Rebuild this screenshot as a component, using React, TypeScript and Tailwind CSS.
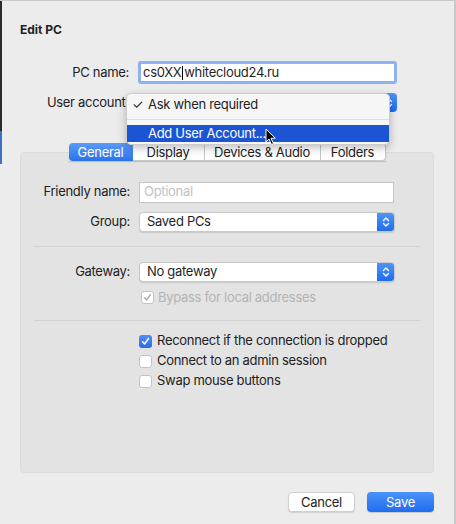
import React from "react";

const font = { fontFamily: "Inter, 'Noto Sans', sans-serif" };

function Chevrons() {
    return (
        <svg width="8" height="12" viewBox="0 0 8 12" fill="none">
            <path d="M1.5 4.5L4 2L6.5 4.5" stroke="white" strokeWidth="1.4" strokeLinecap="round" strokeLinejoin="round" />
            <path d="M1.5 7.5L4 10L6.5 7.5" stroke="white" strokeWidth="1.4" strokeLinecap="round" strokeLinejoin="round" />
        </svg>
    );
}

function Popup({ value }: { value: string }) {
    return (
        <div className="flex h-[20px] w-[256px] items-stretch rounded-[4px] border border-[#c9c9c9] bg-white shadow-[0_1px_1px_rgba(0,0,0,0.12)]">
            <div className="flex flex-1 items-center pl-[7px] text-[13px] text-[#1f1f1f]">{value}</div>
            <div className="flex w-[17px] items-center justify-center rounded-r-[3px] bg-gradient-to-b from-[#4e95f8] to-[#1f6cf0]">
                <Chevrons />
            </div>
        </div>
    );
}

function Check({ checked = false, disabled = false }: { checked?: boolean; disabled?: boolean }) {
    if (checked && !disabled) {
        return (
            <div className="flex h-[13px] w-[13px] items-center justify-center rounded-[3px] bg-gradient-to-b from-[#4f8ff7] to-[#2a6be8]">
                <svg width="9" height="9" viewBox="0 0 9 9" fill="none">
                    <path d="M1.5 4.8L3.6 7L7.5 1.5" stroke="white" strokeWidth="1.5" strokeLinecap="round" strokeLinejoin="round" />
                </svg>
            </div>
        );
    }
    return (
        <div className="flex h-[13px] w-[13px] items-center justify-center rounded-[3px] border border-[#c4c4c4] bg-white">
            {checked ? (
                <svg width="9" height="9" viewBox="0 0 9 9" fill="none">
                    <path d="M1.5 4.8L3.6 7L7.5 1.5" stroke="#b0b0b0" strokeWidth="1.4" strokeLinecap="round" strokeLinejoin="round" />
                </svg>
            ) : null}
        </div>
    );
}

function Row({ label, children }: { label: string; children: React.ReactNode }) {
    return (
        <div className="flex items-center">
            <div className="w-[118px] pr-[9px] text-right text-[13px] text-[#222]">{label}</div>
            {children}
        </div>
    );
}

function Separator() {
    return <div className="mx-[13px] h-px bg-[#d2d2d2]" />;
}

export default function App() {
    return (
        <div style={font} className="relative h-[524px] w-[456px] overflow-hidden border-r-2 border-t border-[#c8c8c8] bg-[#ececec] tracking-[-0.3px] text-[#222]">
            {/* background window edge */}
            <div className="absolute left-0 top-0 h-[130px] w-[2px] bg-[#2b2b2b]" />
            <div className="absolute left-0 top-[130px] h-[33px] w-[2px] bg-[#3d6fc4]" />

            <div className="px-[20px] pt-[21px]">
                <div className="text-[12px] font-bold leading-[16px] tracking-normal text-[#222]">Edit PC</div>

                <div className="mt-[23px]">
                    <Row label="PC name:">
                        <div className="flex h-[23px] w-[259px] items-center rounded-[3px] border-[3px] border-[#8fb3ee] bg-white pl-[2px] text-[13px] text-[#1f1f1f]">
                            cs0XX<span className="mx-px inline-block h-[14px] w-px bg-black" />whitecloud24.ru
                        </div>
                    </Row>
                </div>

                <div className="mt-[9px]">
                    <Row label="User account:">
                        <div className="flex h-[19px] w-[259px] justify-end">
                            <div className="flex w-[16px] items-center justify-center rounded-r-[4px] bg-gradient-to-b from-[#4e95f8] to-[#1f6cf0]">
                                <Chevrons />
                            </div>
                        </div>
                    </Row>
                </div>

                {/* tabs and group box */}
                <div className="mt-[30px] flex justify-center">
                    <div className="relative z-10 flex h-[18px] text-[13px] leading-[16px] shadow-[0_1px_1px_rgba(0,0,0,0.15)]">
                        <div className="flex w-[64px] items-center justify-center rounded-l-[4px] bg-gradient-to-b from-[#5a9bf8] to-[#2a72ee] text-white">General</div>
                        <div className="flex w-[72px] items-center justify-center border-y border-r border-[#c8c8c8] bg-white">Display</div>
                        <div className="flex w-[116px] items-center justify-center border-y border-r border-[#c8c8c8] bg-white">Devices &amp; Audio</div>
                        <div className="flex w-[65px] items-center justify-center rounded-r-[4px] border-y border-r border-[#c8c8c8] bg-white">Folders</div>
                    </div>
                </div>
                <div className="mt-[-9px] h-[321px] rounded-[4px] border border-[#dcdcdc] bg-[#e3e3e3] pt-[29px]">
                    <div>
                        <Row label="Friendly name:">
                            <div className="flex h-[21px] w-[255px] items-center border border-[#c4c4c4] bg-white pl-[4px] text-[13px] text-[#c2c2c2]">Optional</div>
                        </Row>
                    </div>
                    <div className="mt-[9px]">
                        <Row label="Group:">
                            <Popup value="Saved PCs" />
                        </Row>
                    </div>
                    <div className="mt-[14px]">
                        <Separator />
                    </div>
                    <div className="mt-[15px]">
                        <Row label="Gateway:">
                            <Popup value="No gateway" />
                        </Row>
                    </div>
                    <div className="ml-[120px] mt-[6px] flex items-center gap-[4px] text-[13px] text-[#b4b4b4]">
                        <Check checked disabled />
                        Bypass for local addresses
                    </div>
                    <div className="mt-[13px]">
                        <Separator />
                    </div>
                    <div className="ml-[118px] mt-[12px] flex flex-col gap-[4px] text-[13px] text-[#222]">
                        <div className="flex h-[16px] items-center gap-[5px]">
                            <Check checked />
                            Reconnect if the connection is dropped
                        </div>
                        <div className="flex h-[16px] items-center gap-[5px]">
                            <Check />
                            Connect to an admin session
                        </div>
                        <div className="flex h-[16px] items-center gap-[5px]">
                            <Check />
                            Swap mouse buttons
                        </div>
                    </div>
                </div>

                <div className="mt-[19px] flex justify-end gap-[12px]">
                    <button className="h-[20px] w-[67px] rounded-[4px] border border-[#cfcfcf] bg-white text-[13px] leading-[18px] text-[#222] shadow-[0_1px_1px_rgba(0,0,0,0.12)]">
                        Cancel
                    </button>
                    <button className="h-[20px] w-[67px] rounded-[4px] bg-gradient-to-b from-[#4b92f8] to-[#1f6cf0] text-[13px] leading-[20px] text-white shadow-[0_1px_1px_rgba(0,0,0,0.15)]">
                        Save
                    </button>
                </div>
            </div>

            {/* open popup menu */}
            <div className="absolute left-[126px] top-[92px] z-20 w-[264px] rounded-[5px] border border-[#cdcdcd] bg-[#f6f6f6] py-[2px] text-[13px] shadow-[0_3px_8px_rgba(0,0,0,0.25)]">
                <div className="flex h-[18px] items-center pl-[5px] text-[#222]">
                    <span className="w-[16px]">✓</span>Ask when required
                </div>
                <div className="my-[5px] h-px bg-[#dedede]" />
                <div className="flex h-[17px] items-center bg-[#1b55d4] pl-[21px] text-white">Add User Account...</div>
            </div>

            {/* mouse pointer */}
            <svg className="absolute left-[265px] top-[127px] z-30" width="12" height="18" viewBox="0 0 12 18">
                <path d="M1 1L1 14L4 11L6.5 16.5L8.5 15.6L6 10.2L10.3 10.2Z" fill="black" stroke="white" strokeWidth="1" strokeLinejoin="round" />
            </svg>
        </div>
    );
}
